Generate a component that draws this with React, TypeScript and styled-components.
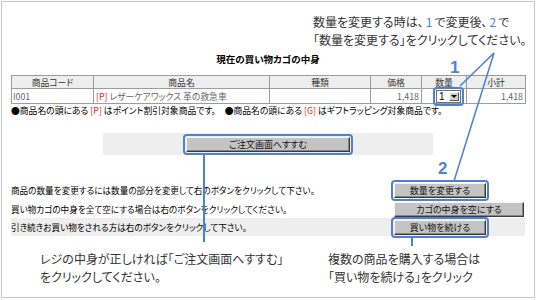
import styled, { createGlobalStyle } from "styled-components";

const BLUE = "#4f81d3";
const JP = `"Noto Sans CJK JP", "Noto Sans", sans-serif`;

const GlobalStyle = createGlobalStyle`
  html, body {
    margin: 0;
    padding: 0;
    background: #ffffff;
  }
  body {
    font-family: ${JP};
    font-feature-settings: "palt";
    color: #000000;
  }
  * {
    box-sizing: border-box;
  }
`;

const Frame = styled.div`
  position: relative;
  width: 534px;
  height: 297px;
  margin: 1px 0 0 1px;
  border: 1px solid #c6c6c6;
  padding: 0 9px;
  overflow: hidden;
`;

const TopNote = styled.div`
  padding: 11px 0 0 302px;
  font-size: 12px;
  line-height: 18px;
  color: #333333;
  white-space: nowrap;
`;

const Num = styled.span`
  margin: 0 2px;
  color: ${BLUE};
`;

const Title = styled.h1`
  margin: 3px 0 0;
  font-size: 9.5px;
  line-height: 14px;
  font-weight: bold;
  text-align: center;
`;

const Cart = styled.table`
  margin-top: 9px;
  width: 514px;
  border-collapse: collapse;
  table-layout: fixed;
  font-size: 8.8px;
`;

const Head = styled.th`
  height: 13px;
  padding: 0;
  line-height: 11px;
  font-weight: normal;
  color: #333333;
  background: #eeeeee;
  border: 1px solid #9c9c9c;
`;

const Cell = styled.td<{ $align?: "left" | "right"; $pad?: number }>`
  height: 15px;
  padding: 0 2px 0 ${(p) => p.$pad ?? 2}px;
  line-height: 13px;
  text-align: ${(p) => p.$align ?? "left"};
  color: #666666;
  border: 1px solid #9c9c9c;
  white-space: nowrap;
`;

const Red = styled.span`
  color: #ee2222;
`;

const Select = styled.span`
  display: inline-flex;
  align-items: center;
  justify-content: space-between;
  width: 25px;
  height: 13px;
  padding: 0 1px 0 2px;
  border: 1px solid #6e6e6e;
  background: #ffffff;
  font: 10px "Liberation Sans", sans-serif;
  color: #000000;
  vertical-align: middle;
`;

const Arrow = styled.span`
  display: flex;
  align-items: center;
  justify-content: center;
  width: 10px;
  height: 9px;
  background: #d0d0d0;
  border: 1px solid;
  border-color: #ffffff #555555 #555555 #ffffff;
  &::before {
    content: "";
    border-left: 3px solid transparent;
    border-right: 3px solid transparent;
    border-top: 3px solid #000000;
  }
`;

const Marked = styled.span`
  position: relative;
  display: inline-flex;
  &::after {
    content: "";
    position: absolute;
    inset: -3px;
    border: 2px solid ${BLUE};
    border-radius: 4px;
    pointer-events: none;
  }
`;

const Legend = styled.p`
  margin: 0;
  font-size: 8.8px;
  line-height: 14px;
  white-space: nowrap;
`;

const Band = styled.div`
  margin: 15px 0 0 92px;
  width: 330px;
  height: 22px;
  background: #eeeeee;
  display: flex;
  align-items: center;
  justify-content: center;
`;

const Button = styled.button<{ $w: number }>`
  width: ${(p) => p.$w}px;
  height: 15px;
  padding: 0;
  font-family: ${JP};
  font-feature-settings: "palt";
  font-size: 9px;
  line-height: 13px;
  color: #111111;
  background: #c4c4c4;
  border: 1px solid;
  border-color: #f4f4f4 #3a3a3a #3a3a3a #f4f4f4;
  box-shadow: inset -1px -1px 0 #858585;
`;

const Actions = styled.div`
  margin-top: 26px;
`;

const ActionRow = styled.div<{ $h: number; $shaded?: boolean }>`
  display: grid;
  grid-template-columns: 1fr 131px;
  align-items: center;
  height: ${(p) => p.$h}px;
  background: ${(p) => (p.$shaded ? "#eeeeee" : "transparent")};
  font-size: 8.6px;
  line-height: 13px;
  white-space: nowrap;
`;

const Callouts = styled.div`
  margin-top: 14px;
  padding-left: 29px;
  display: grid;
  grid-template-columns: 288px 1fr;
  font-size: 12px;
  line-height: 18px;
  color: #333333;
  white-space: nowrap;
`;

const Leaders = styled.svg`
  position: absolute;
  left: -2px;
  top: -2px;
  width: 536px;
  height: 300px;
  pointer-events: none;
`;

const Step = styled.span<{ $x: number; $y: number }>`
  position: absolute;
  left: ${(p) => p.$x}px;
  top: ${(p) => p.$y}px;
  font: bold 17px/16px "Liberation Sans", sans-serif;
  color: ${BLUE};
`;

const columns = [82, 176, 101, 51, 45, 59];

export default function App() {
  return (
    <>
      <GlobalStyle />
      <Frame>
        <TopNote>
          <div>
            数量を変更する時は、<Num>1</Num>で変更後、<Num>2</Num>で
          </div>
          <div>「数量を変更する」をクリックしてください。</div>
        </TopNote>

        <Title>現在の買い物カゴの中身</Title>

        <Cart>
          <colgroup>
            {columns.map((w, i) => (
              <col key={i} style={{ width: w }} />
            ))}
          </colgroup>
          <thead>
            <tr>
              <Head>商品コード</Head>
              <Head>商品名</Head>
              <Head>種類</Head>
              <Head>価格</Head>
              <Head>数量</Head>
              <Head>小計</Head>
            </tr>
          </thead>
          <tbody>
            <tr>
              <Cell $pad={1}>I001</Cell>
              <Cell>
                <Red>[P]</Red> レザーケアワックス 革の救急車
              </Cell>
              <Cell />
              <Cell $align="right">1,418</Cell>
              <Cell $pad={14}>
                <Marked>
                  <Select>
                    1
                    <Arrow />
                  </Select>
                </Marked>
              </Cell>
              <Cell $align="right">1,418</Cell>
            </tr>
          </tbody>
        </Cart>

        <Legend>
          ●商品名の頭にある <Red>[P]</Red> はポイント割引対象商品です。　●商品名の頭にある <Red>[G]</Red>{" "}
          はギフトラッピング対象商品です。
        </Legend>

        <Band>
          <Marked>
            <Button $w={164}>ご注文画面へすすむ</Button>
          </Marked>
        </Band>

        <Actions>
          <ActionRow $h={19}>
            <span>商品の数量を変更するには数量の部分を変更して右のボタンをクリックして下さい。</span>
            <span>
              <Marked>
                <Button $w={92}>数量を変更する</Button>
              </Marked>
            </span>
          </ActionRow>
          <ActionRow $h={18}>
            <span>買い物カゴの中身を全て空にする場合は右のボタンをクリックしてください。</span>
            <span>
              <Button $w={130}>カゴの中身を空にする</Button>
            </span>
          </ActionRow>
          <ActionRow $h={18} $shaded>
            <span>引き続きお買い物をされる方は右のボタンをクリックして下さい。</span>
            <span>
              <Marked>
                <Button $w={92}>買い物を続ける</Button>
              </Marked>
            </span>
          </ActionRow>
        </Actions>

        <Callouts>
          <div>
            <div>レジの中身が正しければ「ご注文画面へすすむ」</div>
            <div>をクリックしてください。</div>
          </div>
          <div>
            <div>複数の商品を購入する場合は</div>
            <div>「買い物を続ける」をクリック</div>
          </div>
        </Callouts>

        <Leaders viewBox="0 0 536 300">
          <g stroke={BLUE} strokeWidth="1.6" fill="none">
            <line x1="494" y1="53" x2="460" y2="86" />
            <line x1="494" y1="53" x2="454" y2="181" />
            <line x1="204" y1="154" x2="204" y2="242" strokeWidth="2" />
            <line x1="412" y1="237" x2="412" y2="246" strokeWidth="2" />
          </g>
        </Leaders>
        <Step $x={448} $y={58}>1</Step>
        <Step $x={436} $y={159}>2</Step>
      </Frame>
    </>
  );
}
